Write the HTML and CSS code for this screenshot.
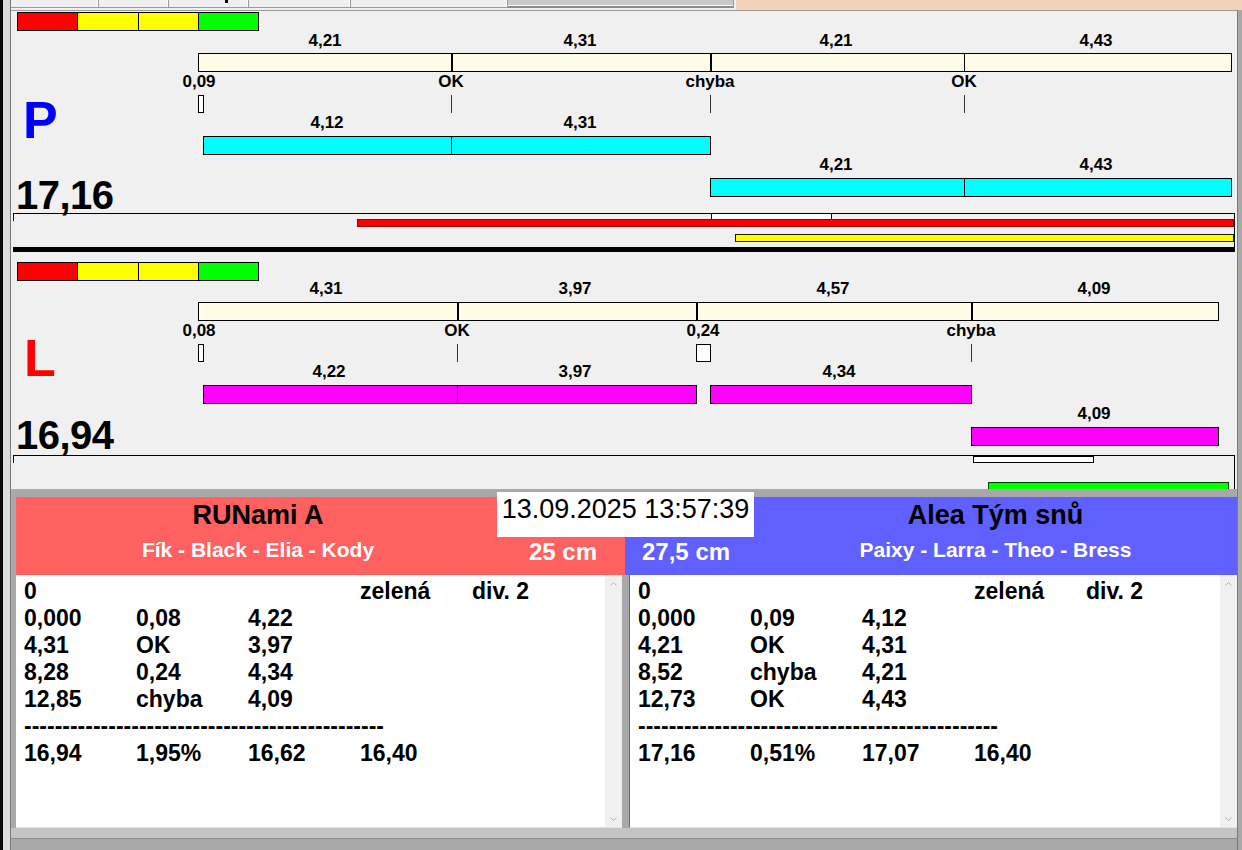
FILE: index.html
```html
<!DOCTYPE html>
<html lang="cs">
<head>
<meta charset="utf-8">
<title>Agility – časomíra</title>
<link rel="stylesheet" href="styles.css">
</head>
<body>
<div class="app">
  <div class="tabbar">
    <div class="tab-edge"></div>
    <div class="tab" style="width:88px"></div>
    <div class="tab" style="width:70px"></div>
    <div class="tab" style="width:80px"><span class="tabmark"></span></div>
    <div class="tab" style="width:102px"></div>
    <div class="tab" style="width:157px"></div>
    <div class="tab tab-dark" style="width:226px"></div>
    <div class="tab-fill"></div>
  </div>
  <div class="workspace">
    <div class="edge-l"></div>
    <div class="center">

      <div class="canvas canvas-p">
        <div class="colorbar"><i class="c-red"></i><i class="c-yel"></i><i class="c-yel"></i><i class="c-grn"></i></div>
        <span class="lbl r1" style="left:314px">4,21</span>
        <span class="lbl r1" style="left:569px">4,31</span>
        <span class="lbl r1" style="left:825px">4,21</span>
        <span class="lbl r1" style="left:1085px">4,43</span>
        <div class="track main-track" style="left:187px;width:1034px">
          <i class="dv thick" style="left:252px"></i>
          <i class="dv thick" style="left:511px"></i>
          <i class="dv" style="left:765px"></i>
        </div>
        <span class="lbl r2" style="left:188px">0,09</span>
        <span class="lbl r2" style="left:440px">OK</span>
        <span class="lbl r2" style="left:699px">chyba</span>
        <span class="lbl r2" style="left:953px">OK</span>
        <i class="tick box" style="left:187px;width:6px"></i>
        <i class="tick line" style="left:440px"></i>
        <i class="tick line" style="left:699px"></i>
        <i class="tick line" style="left:953px"></i>
        <span class="letter letter-p">P</span>
        <span class="lbl r3" style="left:316px">4,12</span>
        <span class="lbl r3" style="left:569px">4,31</span>
        <div class="track cyan run1" style="left:192px;width:508px">
          <i class="dv" style="left:247px"></i>
        </div>
        <span class="lbl r4" style="left:825px">4,21</span>
        <span class="lbl r4" style="left:1085px">4,43</span>
        <div class="track cyan run2" style="left:699px;width:522px">
          <i class="dv" style="left:253px"></i>
        </div>
        <span class="big">17,16</span>
        <div class="lane-box"></div>
        <i class="mark white" style="left:700px;width:121px;top:203px;height:8px"></i>
        <i class="mark red" style="left:346px;width:877px;top:209px;height:8px"></i>
        <i class="mark yellow" style="left:724px;width:499px;top:224px;height:8px"></i>
        <div class="sep-line"></div>
      </div>

      <div class="canvas canvas-l">
        <div class="colorbar"><i class="c-red"></i><i class="c-yel"></i><i class="c-yel"></i><i class="c-grn"></i></div>
        <span class="lbl r1" style="left:315px">4,31</span>
        <span class="lbl r1" style="left:564px">3,97</span>
        <span class="lbl r1" style="left:822px">4,57</span>
        <span class="lbl r1" style="left:1083px">4,09</span>
        <div class="track main-track" style="left:187px;width:1021px">
          <i class="dv thick" style="left:258px"></i>
          <i class="dv thick" style="left:497px"></i>
          <i class="dv thick" style="left:772px"></i>
        </div>
        <span class="lbl r2" style="left:188px">0,08</span>
        <span class="lbl r2" style="left:446px">OK</span>
        <span class="lbl r2" style="left:692px">0,24</span>
        <span class="lbl r2" style="left:960px">chyba</span>
        <i class="tick box" style="left:187px;width:6px"></i>
        <i class="tick line" style="left:446px"></i>
        <i class="tick box" style="left:685px;width:15px"></i>
        <i class="tick line" style="left:960px"></i>
        <span class="letter letter-l">L</span>
        <span class="lbl r3" style="left:318px">4,22</span>
        <span class="lbl r3" style="left:564px">3,97</span>
        <span class="lbl r3" style="left:828px">4,34</span>
        <div class="track magenta run1" style="left:192px;width:494px">
          <i class="dv" style="left:253px"></i>
        </div>
        <div class="track magenta run1" style="left:699px;width:262px"></div>
        <span class="lbl r4" style="left:1083px">4,09</span>
        <div class="track magenta run2" style="left:960px;width:248px"></div>
        <span class="big">16,94</span>
        <div class="lane-box"></div>
        <i class="mark white" style="left:962px;width:121px;top:204px;height:7px"></i>
        <i class="mark green" style="left:977px;width:241px;top:230px;height:8px"></i>
      </div>

      <div class="gap"></div>

      <div class="bottom">
        <div class="heads">
          <div class="team team-red">
            <div class="team-main">
              <div class="team-name">RUNami A</div>
              <div class="team-dogs">Fík - Black - Elia - Kody</div>
            </div>
            <div class="team-side side-right">25 cm</div>
          </div>
          <div class="team team-blue">
            <div class="team-side side-left">27,5 cm</div>
            <div class="team-main">
              <div class="team-name">Alea Tým snů</div>
              <div class="team-dogs">Paixy - Larra - Theo - Bress</div>
            </div>
          </div>
        </div>
        <div class="lists">
          <div class="list list-left">
            <div class="list-body">
              <div class="row"><span>0</span><span></span><span></span><span>zelená</span><span>div. 2</span></div>
              <div class="row"><span>0,000</span><span>0,08</span><span>4,22</span></div>
              <div class="row"><span>4,31</span><span>OK</span><span>3,97</span></div>
              <div class="row"><span>8,28</span><span>0,24</span><span>4,34</span></div>
              <div class="row"><span>12,85</span><span>chyba</span><span>4,09</span></div>
              <div class="dash">-----------------------------------------------</div>
              <div class="row"><span>16,94</span><span>1,95%</span><span>16,62</span><span>16,40</span></div>
            </div>
            <div class="scroll">
              <svg class="arrow" viewBox="0 0 7 4" width="7" height="4"><path d="M0.5 3.5 L3.5 0.5 L6.5 3.5" fill="none" stroke="#b4b4b4" stroke-width="1"/></svg>
              <svg class="arrow" viewBox="0 0 7 4" width="7" height="4"><path d="M0.5 0.5 L3.5 3.5 L6.5 0.5" fill="none" stroke="#b4b4b4" stroke-width="1"/></svg>
            </div>
          </div>
          <div class="list list-right">
            <div class="list-body">
              <div class="row"><span>0</span><span></span><span></span><span>zelená</span><span>div. 2</span></div>
              <div class="row"><span>0,000</span><span>0,09</span><span>4,12</span></div>
              <div class="row"><span>4,21</span><span>OK</span><span>4,31</span></div>
              <div class="row"><span>8,52</span><span>chyba</span><span>4,21</span></div>
              <div class="row"><span>12,73</span><span>OK</span><span>4,43</span></div>
              <div class="dash">-----------------------------------------------</div>
              <div class="row"><span>17,16</span><span>0,51%</span><span>17,07</span><span>16,40</span></div>
            </div>
            <div class="scroll">
              <svg class="arrow" viewBox="0 0 7 4" width="7" height="4"><path d="M0.5 3.5 L3.5 0.5 L6.5 3.5" fill="none" stroke="#b4b4b4" stroke-width="1"/></svg>
              <svg class="arrow" viewBox="0 0 7 4" width="7" height="4"><path d="M0.5 0.5 L3.5 3.5 L6.5 0.5" fill="none" stroke="#b4b4b4" stroke-width="1"/></svg>
            </div>
          </div>
        </div>
        <div class="datebox">13.09.2025 13:57:39</div>
      </div>

      <div class="status"></div>
    </div>
    <div class="edge-r"></div>
  </div>
</div>
</body>
</html>
```

FILE: styles.css
```css
* { box-sizing: border-box; }
html, body { margin: 0; padding: 0; }
body {
  width: 1242px;
  height: 850px;
  overflow: hidden;
  background: #a9a9a9;
  font-family: "Liberation Sans", Arial, sans-serif;
  color: #000;
}
.app {
  width: 1242px;
  height: 850px;
  display: flex;
  flex-direction: column;
}

/* ---------- top tab strip ---------- */
.tabbar {
  height: 10px;
  flex: none;
  display: flex;
  background: #f0f0f0;
}
.tab-edge {
  width: 11px;
  background: linear-gradient(to right, #0a0a0a 0 3px, #dcdcdc 3px 10px, #7a7a7a 10px 11px);
}
.tab {
  position: relative;
  height: 8px;
  border-right: 1px solid #9a9a9a;
  border-bottom: 1px solid #9a9a9a;
  box-shadow: inset -1px 0 0 #fff;
  background: #f0f0f0;
}
.tab-dark {
  background: #c8c8c8;
  border-bottom: 2px solid #8a8a8a;
  box-shadow: inset 0 -1px 0 #fff;
}
.tabmark {
  position: absolute;
  left: 56px;
  top: 0;
  width: 3px;
  height: 3px;
  background: #000;
}
.tab-fill {
  flex: 1;
  margin-left: 2px;
  height: 11px;
  background: #f2d4bc;
}

/* ---------- workspace ---------- */
.workspace {
  flex: 1;
  min-height: 0;
  display: flex;
}
.edge-l {
  width: 11px;
  flex: none;
  background: linear-gradient(to right, #0a0a0a 0 3px, #dcdcdc 3px 10px, #7a7a7a 10px 11px);
}
.center {
  width: 1226px;
  flex: none;
  display: flex;
  flex-direction: column;
}
.edge-r {
  width: 5px;
  flex: none;
  background: #a9a9a9;
  border-left: 1px solid #7a7a7a;
}

/* ---------- timing canvases ---------- */
.canvas {
  position: relative;
  flex: none;
  overflow: hidden;
  background: #f0f0f0;
}
.canvas-p { height: 242px; box-shadow: inset 0 1px 0 #9a9a9a; }
.canvas-l { height: 237px; }

.colorbar {
  position: absolute;
  left: 6px;
  width: 242px;
  height: 19px;
  border: 1px solid #000;
  display: flex;
}
.canvas-p .colorbar { top: 2px; }
.canvas-l .colorbar { top: 10px; }
.colorbar i { flex: 1; }
.colorbar i + i { border-left: 1px solid #000; }
.c-red { background: #ff0000; }
.c-yel { background: #ffff00; }
.c-grn { background: #00ff00; }

.lbl {
  position: absolute;
  transform: translateX(-50%);
  font-weight: 700;
  font-size: 17px;
  line-height: 18px;
  white-space: nowrap;
}
.canvas-p .r1 { top: 22px; }
.canvas-p .r2 { top: 63px; }
.canvas-p .r3 { top: 104px; }
.canvas-p .r4 { top: 146px; }
.canvas-l .r1 { top: 28px; }
.canvas-l .r2 { top: 70px; }
.canvas-l .r3 { top: 111px; }
.canvas-l .r4 { top: 153px; }

.track {
  position: absolute;
  height: 19px;
  border: 1px solid #000;
  background: #fffde8;
}
.canvas-p .main-track { top: 43px; }
.canvas-l .main-track { top: 50px; }
.canvas-p .run1 { top: 126px; }
.canvas-p .run2 { top: 168px; }
.canvas-l .run1 { top: 133px; }
.canvas-l .run2 { top: 175px; }
.cyan { background: #00ffff; }
.magenta { background: #ff00ff; }
.dv {
  position: absolute;
  top: 0;
  bottom: 0;
  width: 1px;
  background: #000;
}
.dv.thick { width: 2px; }

.tick {
  position: absolute;
  height: 18px;
}
.canvas-p .tick { top: 85px; }
.canvas-l .tick { top: 92px; }
.tick.line { width: 1px; background: #333; }
.tick.box { border: 1px solid #000; background: #fff; }

.letter {
  position: absolute;
  font-weight: 700;
  font-size: 52px;
  line-height: 52px;
}
.letter-p { top: 84px; left: 12px; color: #0000ff; }
.letter-l { top: 80px; left: 13px; color: #ff0000; }

.big {
  position: absolute;
  left: 5px;
  font-weight: 700;
  font-size: 40px;
  line-height: 40px;
  letter-spacing: -0.5px;
}
.canvas-p .big { top: 165px; }
.canvas-l .big { top: 163px; }

.lane-box {
  position: absolute;
  left: 2px;
  top: 203px;
  width: 1222px;
  height: 34px;
  border-top: 1px solid #000;
  border-right: 1px solid #000;
}
.lane-box::before {
  content: "";
  position: absolute;
  left: 0;
  top: 0;
  width: 1px;
  height: 7px;
  background: #000;
}
.mark {
  position: absolute;
  border: 1px solid #000;
}
.mark.white { background: #fff; }
.mark.red { background: #ff0000; border-color: #9a0000; }
.mark.yellow { background: #ffff00; border-color: #202000; }
.mark.green { background: #00ff00; border-color: #004000; }

.sep-line {
  position: absolute;
  left: 2px;
  top: 237px;
  width: 1222px;
  height: 5px;
  background: #000;
}

.gap {
  height: 8px;
  flex: none;
  background: #a9a9a9;
}

/* ---------- bottom: teams and results ---------- */
.bottom {
  position: relative;
  height: 331px;
  flex: none;
  padding-left: 5px;
  display: flex;
  flex-direction: column;
  background: #a9a9a9;
}
.heads {
  height: 78px;
  flex: none;
  display: flex;
}
.team {
  display: flex;
  font-weight: 700;
}
.team-red { width: 609px; background: #ff6060; }
.team-blue { flex: 1; background: #6060ff; }
.team-red .team-main { width: 484px; }
.team-blue .team-main { flex: 1; }
.team-red .team-side { flex: 1; }
.team-blue .team-side { width: 129px; }
.team-main {
  padding-top: 3px;
  text-align: center;
}
.team-name {
  font-size: 27px;
  line-height: 30px;
  color: #000;
}
.team-dogs {
  margin-top: 8px;
  font-size: 21px;
  line-height: 24px;
  color: #fff;
}
.team-side {
  padding-top: 42px;
  font-size: 24px;
  line-height: 26px;
  color: #fff;
  white-space: nowrap;
}
.side-right { text-align: right; padding-right: 28px; }
.side-left { padding-left: 17px; }

.lists {
  flex: 1;
  display: flex;
  gap: 7px;
}
.list {
  display: flex;
  background: #fff;
  border-bottom: 1px solid #e4e4e4;
}
.list-left { width: 606px; }
.list-right { flex: 1; border-left: 1px solid #6a6a6a; }
.list-body {
  flex: 1;
  padding: 3px 0 0 8px;
  font-weight: 700;
  font-size: 23px;
  line-height: 27px;
}
.row {
  display: grid;
  grid-template-columns: repeat(5, 112px);
  height: 27px;
  white-space: nowrap;
}
.dash {
  height: 27px;
  white-space: nowrap;
}
.scroll {
  width: 17px;
  flex: none;
  background: #f0f0f0;
  display: flex;
  flex-direction: column;
  justify-content: space-between;
  align-items: center;
  padding: 7px 0 6px;
}
.arrow { display: block; }

.datebox {
  position: absolute;
  left: 486px;
  top: -5px;
  width: 257px;
  height: 45px;
  background: #fff;
  font-size: 27px;
  line-height: 34px;
  text-align: center;
  white-space: nowrap;
}

.status {
  flex: 1;
  background: linear-gradient(to bottom, #c4c4c4 0 10px, #8c8c8c 10px 11px, #a9a9a9 11px);
}
```
